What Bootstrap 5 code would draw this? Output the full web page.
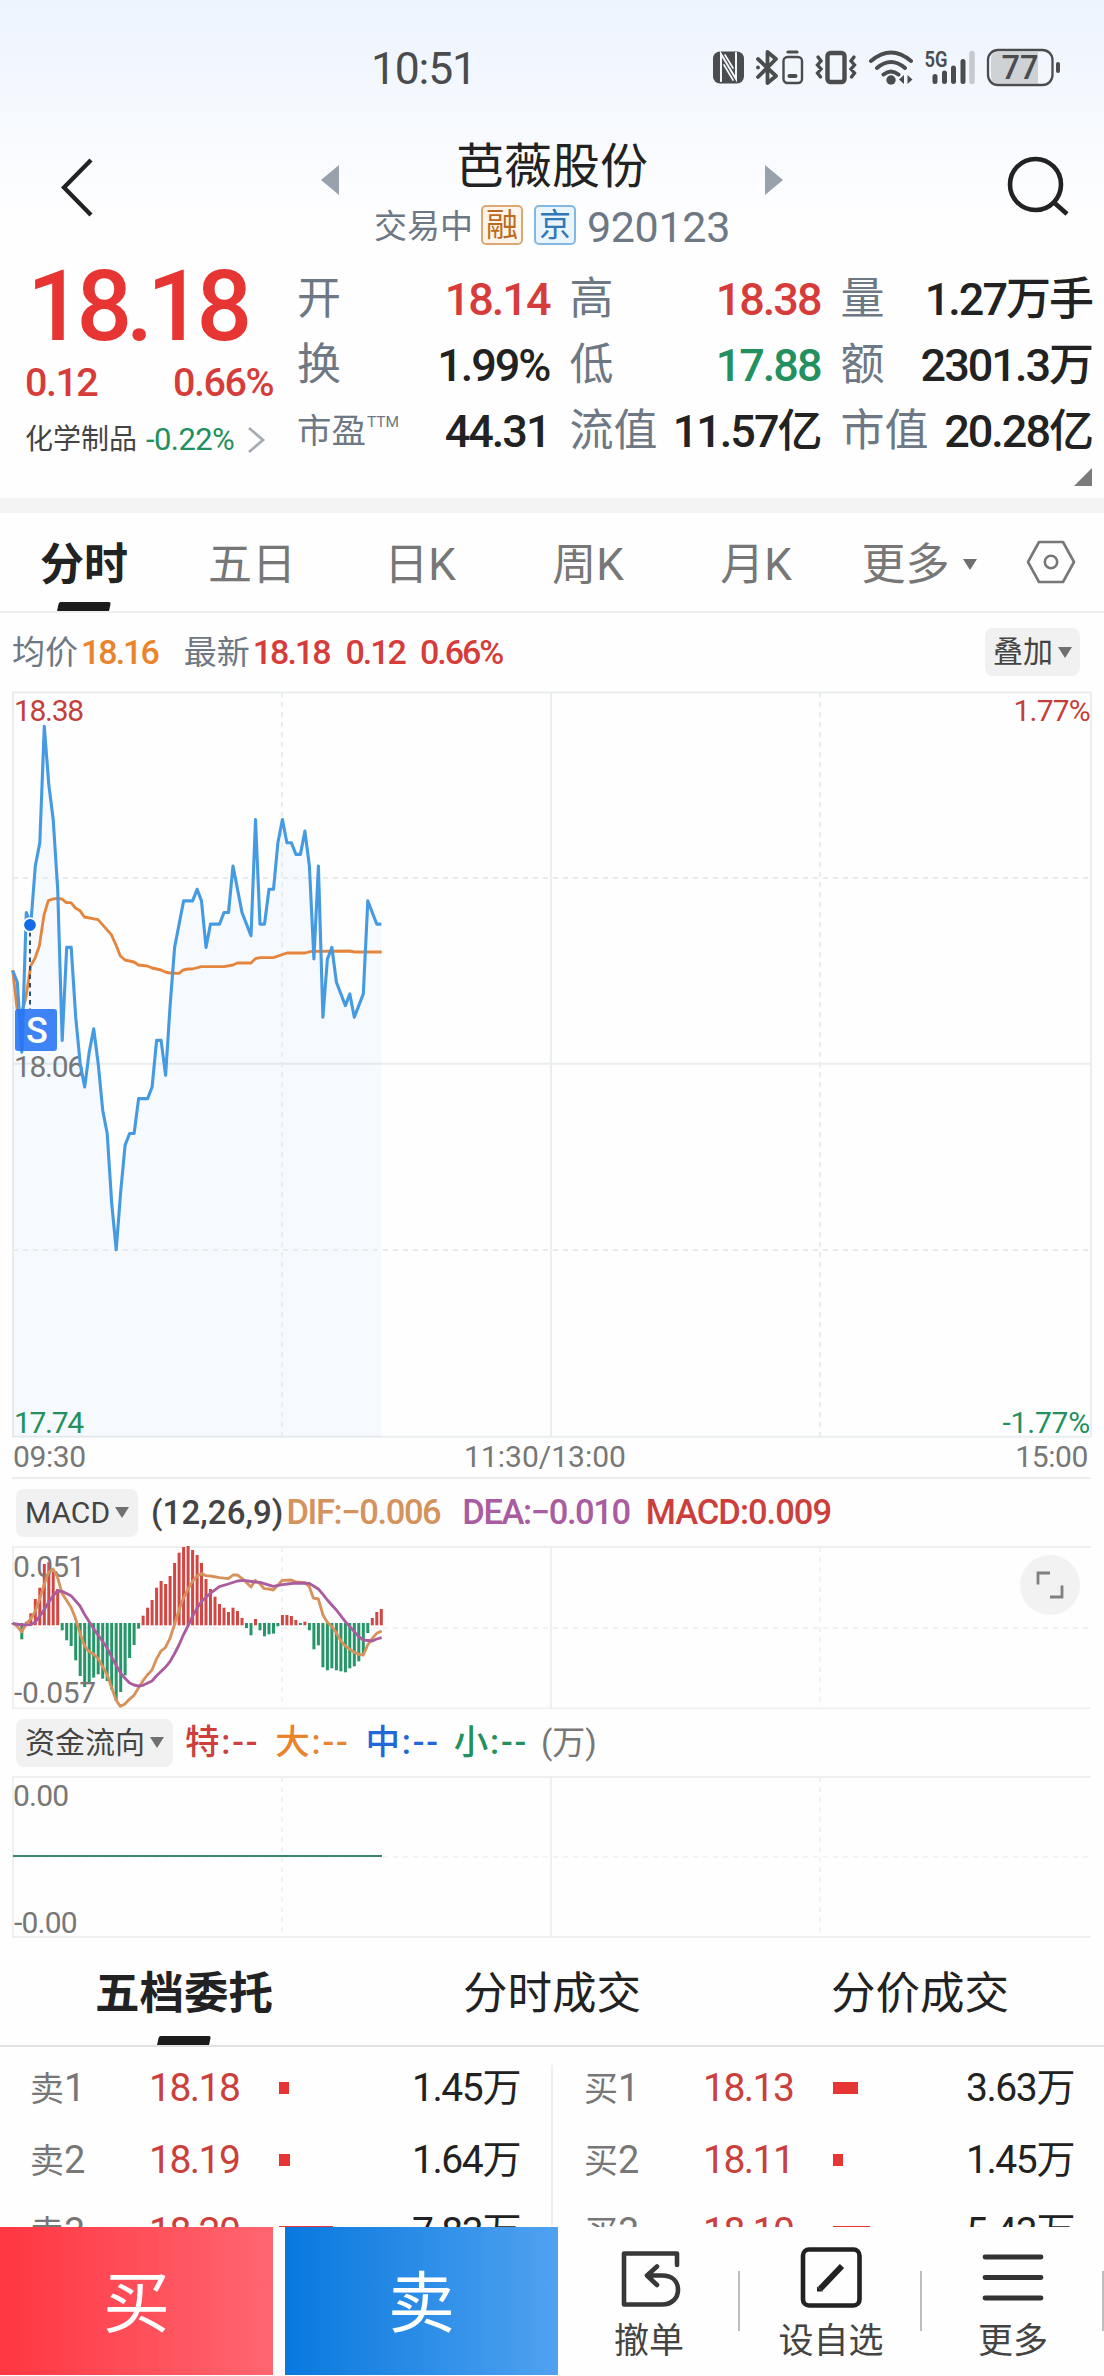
<!DOCTYPE html>
<html lang="zh-CN">
<head>
<meta charset="utf-8">
<meta name="viewport" content="width=device-width, initial-scale=1">
<title>芭薇股份 920123</title>
<link rel="stylesheet" href="https://cdn.jsdelivr.net/npm/bootstrap@5.3.0/dist/css/bootstrap.min.css">
<style>
  :root{--up:#d63c3a;--down:#22905f;--ink:#222;--slate:#6d7884;--soft:#777;--rule:#eceeef}
  body{font-family:Roboto,"Noto Sans CJK SC",sans-serif;color:var(--ink);background:#fefefe;width:1104px;height:2376px;overflow:hidden;line-height:1}
  .up{color:var(--up)} .down{color:var(--down)} .slate{color:var(--slate)} .soft{color:var(--soft)}
  svg{display:block;flex:none}
  svg text{font-family:Roboto,"Noto Sans CJK SC",sans-serif}
  .topzone{height:250px;background:linear-gradient(#edf4fe 0,#f6f9fe 45%,#fefefe 90%)}
  .statusbar{height:120px;padding:15px 44px 0 371px}
  .clock{font-size:44.5px;letter-spacing:-1.2px;color:#4a4b4d;padding-top:3px}
  .titlebar{height:130px;display:grid;grid-template-columns:321px 462px 321px}
  .stockname{font-size:48px;line-height:56px;margin-top:19px}
  .substate{font-size:33px;line-height:42px;margin-top:6px}
  .tagbox{width:42px;height:40px;border:2px solid;border-radius:5px;font-size:32px}
  .tag-rong{color:#bb6a20;border-color:#dca873;background:#fef5ea}
  .tag-jing{color:#3078b8;border-color:#84b8e4;background:#eaf5fe}
  .quote{height:248px;display:grid;grid-template-columns:297px 796px}
  .bigprice{font-size:98px;font-weight:500;letter-spacing:-6.2px;line-height:100px;color:#e63533;padding-left:27px;margin-top:7px}
  .change{font-size:39.5px;font-weight:500;letter-spacing:-1.5px;line-height:40px;padding:0 24px 0 25px;margin-top:6px}
  .sector{font-size:28px;line-height:34px;color:#444;padding-left:25px;margin-top:20px}
  .sector .pct{font-size:31px;letter-spacing:-.6px;margin-left:9px}
  .facts{display:grid;grid-template-columns:252.5px 251px 251.5px;column-gap:20px;grid-auto-rows:66px;margin-top:16px}
  .facts .lab{font-size:44px;color:var(--slate)}
  .facts .val{font-size:45px;font-weight:500;letter-spacing:-2px;white-space:nowrap}
  .band{height:15px;background:#f4f4f4}
  .periods{height:100px;display:grid;grid-template-columns:repeat(5,168px) 158px 1fr;border-bottom:2px solid var(--rule);font-size:44px;color:var(--soft)}
  .periods div,.depthtabs div{padding-top:5px}
  .picked{color:#222;font-weight:700;position:relative}
  .picked::after{content:"";position:absolute;bottom:0;left:50%;margin-left:-26px;width:52px;height:9px;background:#1c1c1c;transform:skewX(-12deg);border-radius:2px 2px 0 0}
  .dd::after{content:"";display:inline-block;border:7px solid transparent;border-top:11px solid #707070;border-bottom:0;margin-left:5px}
  .brief{height:78px;padding:0 24px 0 12px;font-size:33px}
  .brief b,.indic b{font-weight:500;font-size:34px;letter-spacing:-2px}
  .chip{background:#f1f1f1;border-radius:8px;height:48px;font-size:30px;color:#444;padding:0 9px}
  .brief .chip{padding:0 8px}
  .indic{height:67px;padding-left:16px;font-size:33px}
  .indic b{letter-spacing:-1.4px;font-size:34.5px}
  .indic .flow{letter-spacing:1.8px}
  .depthtabs{height:109px;display:grid;grid-template-columns:repeat(3,1fr);font-size:44.5px;border-bottom:2px solid #e2e2e2}
  .depth{height:180px;overflow:hidden;display:grid;grid-template-columns:552px 552px;padding-top:5px;position:relative}
  .depth::after{content:"";position:absolute;left:551px;top:18px;bottom:0;width:2px;background:#f0f0f0}
  .lvl{height:72px;display:grid;grid-template-columns:119px 130px 120px 121px;padding-left:30px;font-size:39px}
  .buys .lvl{padding-left:32px}
  .lvl .lab{font-size:34px;color:var(--soft)} .lvl .lab i{font-style:normal;font-size:38px}
  .lvl .px{color:#cb3f3d;letter-spacing:-1.5px}
  .lvl .qty{letter-spacing:-1.4px}
  .lvl .vol{height:12px;background:#e63533}
  .actions{height:148px;background:#fefefe;color:#444}
  .trade{height:148px;width:273px;color:#fff;font-size:67px;padding:7px 0 0;border:0}
  .buy{background:linear-gradient(90deg,#ff3742,#ff6671)}
  .sell{background:linear-gradient(90deg,#0878de,#50a2f0);margin-left:12px}
  .tool{font-size:35px;padding-top:15px;position:relative}
  .tool::after{content:"";position:absolute;right:0;top:44px;width:2.5px;height:60px;background:#bdbdbd}
  .tool span{line-height:40px;margin-top:10px}
</style>
</head>
<body>
<header class="topzone">
  <div class="statusbar d-flex align-items-center justify-content-between">
    <span class="clock">10:51</span>
    <svg width="350" height="42" viewBox="710 47 350 42" fill="none" stroke="#4b4c4e" stroke-width="2.6" stroke-linecap="round">
      <rect x="713" y="51.5" width="31" height="32" rx="7" fill="#4b4c4e" stroke="none"/>
      <path d="M721 81V54l15 25V53" stroke="#f3f7fe" stroke-width="2"/><path d="M724 65l9 15M725 55l8 13M721 54v27" stroke="#f3f7fe" stroke-width="1.7"/>
      <path d="M758 59l18 17-8.500 7V52l8.500 7-18 18" stroke-width="3.800" stroke-linejoin="round"/><circle cx="758" cy="67.500" r="1.900" fill="#4b4c4e" stroke="none"/>
      <rect x="783.500" y="57" width="18.500" height="26" rx="4" stroke-width="2.400"/><path d="M788 52h9" stroke-width="3.200"/><path d="M789.500 76h6" stroke-width="4"/>
      <rect x="827.500" y="53" width="17" height="29" rx="3" stroke-width="4.400"/>
      <path d="M818 57l3 4-3.500 4 3.500 4-3.500 4 3 4M854 57l-3 4 3.500 4-3.500 4 3.500 4-3 4" stroke-width="3.400"/>
      <path d="M871 61q20-17 40 0M877 68q14-12 28 0M883.500 74.500q7.500-6 15 0" stroke-width="4"/><circle cx="891" cy="80" r="4.700" fill="#4b4c4e" stroke="none"/>
      <path d="M904 75v9l-5-4.500zM907.500 75v9l5-4.500z" fill="#4b4c4e" stroke="none"/>
      <text x="924.500" y="67" font-size="22" font-weight="600" fill="#4b4c4e" stroke="none" textLength="23" lengthAdjust="spacingAndGlyphs">5G</text>
      <path d="M935 76.500v5M944.500 73v8.500M953.500 68v13.500M963 61.500v20" stroke-width="5"/><path d="M972 53.500v28" stroke="#c6c9ce" stroke-width="5.500"/>
      <path d="M998 52h40v31.500h-40q-7 0-7-7v-17.500q0-7 7-7z" fill="#cfd2d5" stroke="none"/>
      <rect x="988" y="50" width="64.500" height="35" rx="10" stroke-width="2.300"/><path d="M1058 64v7" stroke-width="4"/>
      <text x="1020" y="79" font-size="32.500" font-weight="500" text-anchor="middle" fill="#4b4c4e" stroke="none">77</text>
    </svg>
  </div>
  <div class="titlebar">
    <svg width="321" height="130" viewBox="0 120 321 130"><path d="M91 160L64 187.500 91 215" fill="none" stroke="#222" stroke-width="4.300"/></svg>
    <div class="d-flex justify-content-between">
      <svg width="18" height="130" viewBox="0 120 18 130"><path d="M0 180L18 165v30z" fill="#98a2ad"/></svg>
      <div class="text-center">
        <div class="stockname">芭薇股份</div>
        <div class="substate slate d-flex align-items-center justify-content-center">
          <span class="pt-1">交易中</span>
          <span class="tagbox tag-rong d-flex align-items-center justify-content-center ms-2">融</span>
          <span class="tagbox tag-jing d-flex align-items-center justify-content-center" style="margin-left:11px">京</span>
          <span style="font-size:43px;margin-left:11px;padding-top:5px;letter-spacing:-.3px">920123</span>
        </div>
      </div>
      <svg width="18" height="130" viewBox="0 120 18 130"><path d="M18 180L0 165v30z" fill="#98a2ad"/></svg>
    </div>
    <svg width="321" height="130" viewBox="783 120 321 130" fill="none" stroke="#222" stroke-width="4.600"><circle cx="1035.500" cy="184.500" r="25.500"/><path d="M1053.500 202l13.500 12"/></svg>
  </div>
</header>

<section class="quote">
  <div>
    <div class="bigprice">18.18</div>
    <div class="change up d-flex justify-content-between"><span>0.12</span><span>0.66%</span></div>
    <div class="sector d-flex align-items-center">
      <span>化学制品</span><span class="pct down">-0.22%</span>
      <svg class="ms-auto" width="20" height="28" viewBox="0 0 20 28" style="margin-right:30px"><path d="M2 2l14 12L2 26" fill="none" stroke="#a4abb3" stroke-width="2.800"/></svg>
    </div>
  </div>
  <div>
    <div class="facts">
      <div class="d-flex align-items-center justify-content-between"><span class="lab">开</span><span class="val up">18.14</span></div>
      <div class="d-flex align-items-center justify-content-between"><span class="lab">高</span><span class="val up">18.38</span></div>
      <div class="d-flex align-items-center justify-content-between"><span class="lab">量</span><span class="val">1.27万手</span></div>
      <div class="d-flex align-items-center justify-content-between"><span class="lab">换</span><span class="val">1.99%</span></div>
      <div class="d-flex align-items-center justify-content-between"><span class="lab">低</span><span class="val down">17.88</span></div>
      <div class="d-flex align-items-center justify-content-between"><span class="lab">额</span><span class="val">2301.3万</span></div>
      <div class="d-flex align-items-center justify-content-between"><span class="lab d-flex" style="font-size:34.500px">市盈<span style="font-size:15.500px;margin:1px 0 0 1px">TTM</span></span><span class="val">44.31</span></div>
      <div class="d-flex align-items-center justify-content-between"><span class="lab">流值</span><span class="val">11.57亿</span></div>
      <div class="d-flex align-items-center justify-content-between"><span class="lab">市值</span><span class="val">20.28亿</span></div>
    </div>
    <svg class="ms-auto" width="19" height="22" viewBox="0 2 19 22"><path d="M18 6v18H0z" fill="#7b7b7b"/></svg>
  </div>
</section>
<div class="band"></div>

<nav class="periods text-center">
  <div class="picked d-flex align-items-center justify-content-center">分时</div>
  <div class="d-flex align-items-center justify-content-center">五日</div>
  <div class="d-flex align-items-center justify-content-center">日K</div>
  <div class="d-flex align-items-center justify-content-center">周K</div>
  <div class="d-flex align-items-center justify-content-center">月K</div>
  <div class="d-flex align-items-center justify-content-center dd">更多<span class="ms-2"></span></div>
  <div class="d-flex align-items-center justify-content-center pt-0"><svg width="50" height="46" viewBox="0 0 50 46" fill="none" stroke="#777" stroke-width="2.600"><path d="M13 3h24l11 20-11 20H13L2 23z" stroke-linejoin="round"/><circle cx="25" cy="23" r="6.200"/></svg></div>
</nav>

<div class="brief d-flex align-items-center">
  <span class="slate">均价</span><b style="color:#e9842c;margin-left:3px">18.16</b>
  <span class="slate" style="margin-left:26px">最新</span><b class="up" style="margin-left:3px">18.18</b><b class="up" style="margin-left:16px">0.12</b><b class="up" style="margin-left:15px">0.66%</b>
  <span class="chip dd d-flex align-items-center ms-auto">叠加</span>
</div>

<svg width="1104" height="788" viewBox="0 691 1104 788" fill="none">
  <path d="M12 692.500H1091.500M12 1063.700H1091M12 1436.700H1091M13 692V1437M551 692V1437M1091 692V1437M12 1478H1091" stroke="#eaeeee" stroke-width="2"/>
  <path id="area" fill="#2f8be8" fill-opacity=".04"/>
  <path d="M13 878H1091M13 1250H1091M282 692V1437M820 692V1437" stroke="#e8ebec" stroke-width="1.800" stroke-dasharray="5 5"/>
  <g font-size="30" letter-spacing="-1.300">
    <text x="14" y="720.500" fill="#c43f3c">18.38</text>
    <text x="14" y="1077" fill="#777">18.06</text>
    <text x="14" y="1433" fill="#22905f">17.74</text>
    <g letter-spacing="-.8"><text x="1090" y="720.500" fill="#c43f3c" text-anchor="end">1.77%</text>
    <text x="1090" y="1433" fill="#22905f" text-anchor="end" letter-spacing="-.2">-1.77%</text></g>
    <g fill="#777" letter-spacing="-.4"><text x="13" y="1466.500">09:30</text><text x="545" y="1466.500" text-anchor="middle" letter-spacing="0">11:30/13:00</text><text x="1088" y="1466.500" text-anchor="end">15:00</text></g>
  </g>
  <polyline transform="translate(0 680) scale(.33333)" stroke="#e5853c" stroke-width="8.500" stroke-linejoin="round" points="38,870 51,985 60,1005 72,975 78,950 92,858 105,835 118,798 132,705 145,662 159,657 172,655 186,657 199,668 213,668 226,684 240,692 253,711 294,719 334,764 348,795 361,828 375,840 402,846 415,855 442,858 456,864 483,870 496,876 510,879 537,880 550,870 564,867 577,867 604,860 672,860 699,855 712,849 753,849 766,836 780,833 820,833 861,819 915,819 934,814 1049,813 1063,816 1145,816"/>
  <polyline id="price" stroke="#459ae2" stroke-width="3.100" stroke-linejoin="round"/>
  <path d="M30 932V1009" stroke="#2d4f73" stroke-width="2" stroke-dasharray="4.500 4"/>
  <circle cx="30" cy="925" r="6.800" fill="#146be8" stroke="#fff" stroke-width="1.800"/>
  <rect x="15" y="1009" width="42" height="42" rx="3" fill="#2673f5" fill-opacity=".88"/>
  <text x="37" y="1042.500" font-size="36" font-weight="500" fill="#fff" text-anchor="middle">S</text>
</svg>

<div class="indic d-flex align-items-center">
  <span class="chip dd d-flex align-items-center">MACD</span>
  <b style="margin-left:13px;color:#444;letter-spacing:.1px;font-size:33px">(12,26,9)</b>
  <b style="margin-left:3px;color:#d4925c">DIF:−0.006</b>
  <b style="margin-left:22px;color:#a95c9f">DEA:−0.010</b>
  <b style="margin-left:16px;color:#cc3f3c;letter-spacing:-1px">MACD:0.009</b>
</div>

<svg width="1104" height="163" viewBox="0 1546 1104 163" fill="none">
  <path d="M12 1547H1091M12 1708.300H1091M13 1547V1708M551 1547V1708" stroke="#eeefef" stroke-width="1.800"/>
  <path d="M13 1628H1091M282 1547V1708M820 1547V1708" stroke="#f0f1f1" stroke-width="1.800" stroke-dasharray="5 5"/>
  <g id="bars"></g>
  <g fill="#777" font-size="30" letter-spacing="-.8"><text x="13" y="1576.500">0.051</text><text x="14" y="1703" letter-spacing="-.3">-0.057</text></g>
  <g transform="translate(0 1470) scale(.33333)" stroke-width="8.500" stroke-linejoin="round">
    <polyline stroke="#d7925c" points="38,460 51,468 65,486 78,462 92,447 105,425 118,390 132,345 145,308 159,297 172,320 186,370 213,412 226,444 240,490 253,526 265,543 280,552 294,565 307,588 321,613 334,650 348,690 361,709 375,702 388,688 402,676 415,655 429,632 442,615 456,600 469,568 483,543 496,533 510,505 523,465 537,420 550,385 564,358 577,335 591,318 604,311 618,317 631,318 658,323 685,326 699,315 712,315 726,325 753,351 766,331 780,342 793,356 807,357 820,360 834,345 847,331 874,330 888,336 915,338 928,350 940,384 955,387 969,435 982,457 996,470 1009,488 1022,512 1036,528 1063,547 1078,553 1090,555 1103,525 1117,505 1130,490 1145,483"/>
    <polyline stroke="#aa5c9f" points="38,460 65,465 92,464 105,457 118,440 132,420 145,398 159,378 172,363 186,364 213,377 240,408 253,432 280,475 307,513 321,533 334,560 348,585 361,608 375,625 388,638 402,645 415,648 429,646 456,633 469,618 496,592 510,575 523,552 537,525 550,495 564,468 577,440 591,415 604,395 618,382 631,370 658,350 685,342 712,333 731,331 766,336 780,337 820,349 847,344 888,339 928,340 955,357 969,373 982,390 1009,420 1036,455 1063,485 1076,500 1090,510 1117,513 1130,507 1145,503"/>
  </g>
  <circle cx="1050" cy="1585" r="30" fill="#f2f2f2"/>
  <path d="M1038 1584.500V1573H1050M1050 1597H1062V1585.500" stroke="#808080" stroke-width="2.800"/>
</svg>

<div class="indic d-flex align-items-center">
  <span class="chip dd d-flex align-items-center">资金流向</span>
  <b class="flow" style="margin-left:12px;color:#cc3f3c">特:--</b>
  <b class="flow" style="margin-left:16px;color:#e9842c">大:--</b>
  <b class="flow" style="margin-left:16px;color:#2168d6">中:--</b>
  <b class="flow" style="margin-left:14px;color:#22905f">小:--</b>
  <span class="soft" style="margin-left:13px;font-size:33px">(万)</span>
</div>

<svg width="1104" height="162" viewBox="0 1776 1104 162" fill="none">
  <path d="M12 1777H1091M12 1937H1091M13 1777V1937M551 1777V1937" stroke="#eeefef" stroke-width="1.800"/>
  <path d="M13 1856.600H1091M282 1777V1937M820 1777V1937" stroke="#f0f1f1" stroke-width="1.800" stroke-dasharray="5 5"/>
  <path d="M13 1856H382" stroke="#3f8270" stroke-width="2.200"/>
  <g fill="#777" font-size="30" letter-spacing="-.8"><text x="13" y="1806">0.00</text><text x="14" y="1932.500">-0.00</text></g>
</svg>

<nav class="depthtabs">
  <div class="picked d-flex align-items-center justify-content-center">五档委托</div>
  <div class="d-flex align-items-center justify-content-center">分时成交</div>
  <div class="d-flex align-items-center justify-content-center">分价成交</div>
</nav>

<section class="depth">
  <div>
    <div class="lvl align-items-center"><span class="lab">卖<i>1</i></span><span class="px">18.18</span><span class="vol" style="width:10px"></span><span class="qty text-end">1.45万</span></div>
    <div class="lvl align-items-center"><span class="lab">卖<i>2</i></span><span class="px">18.19</span><span class="vol" style="width:11px"></span><span class="qty text-end">1.64万</span></div>
    <div class="lvl align-items-center"><span class="lab">卖<i>3</i></span><span class="px">18.20</span><span class="vol" style="width:54px"></span><span class="qty text-end">7.83万</span></div>
  </div>
  <div class="buys">
    <div class="lvl align-items-center"><span class="lab">买<i>1</i></span><span class="px">18.13</span><span class="vol" style="width:25px"></span><span class="qty text-end">3.63万</span></div>
    <div class="lvl align-items-center"><span class="lab">买<i>2</i></span><span class="px">18.11</span><span class="vol" style="width:10px"></span><span class="qty text-end">1.45万</span></div>
    <div class="lvl align-items-center"><span class="lab">买<i>3</i></span><span class="px">18.10</span><span class="vol" style="width:37px"></span><span class="qty text-end">5.43万</span></div>
  </div>
</section>

<footer class="actions d-flex">
  <button class="trade buy d-flex align-items-center justify-content-center">买</button>
  <button class="trade sell d-flex align-items-center justify-content-center">卖</button>
  <div class="tool d-flex flex-column align-items-center" style="width:182px">
    <svg width="66" height="70" viewBox="616 2242 66 70" fill="none" stroke="#383838" stroke-width="4.600" stroke-linecap="round" stroke-linejoin="round"><path d="M677 2265V2253.500H624V2304.500H662C672 2304.500 678 2298 678 2290C678 2281 672 2275.500 662 2275.500H648M657 2266.500L647 2275.500 657 2285"/></svg>
    <span>撤单</span>
  </div>
  <div class="tool d-flex flex-column align-items-center" style="width:182px">
    <svg width="66" height="70" viewBox="798 2242 66 70" fill="none" stroke="#222"><rect x="803" y="2249.500" width="56.500" height="56" rx="6" stroke-width="4.600"/><path d="M820 2289L842 2266" stroke-width="6"/><path d="M817 2291.500v-5l6 5z" fill="#222" stroke="none"/></svg>
    <span>设自选</span>
  </div>
  <div class="tool d-flex flex-column align-items-center" style="width:182px">
    <svg width="66" height="70" viewBox="980 2242 66 70" stroke="#333" stroke-width="4.800" stroke-linecap="round"><path d="M985 2257H1041M985 2277.500H1041M985 2298H1041"/></svg>
    <span>更多</span>
  </div>
</footer>

<script src="https://cdn.jsdelivr.net/npm/bootstrap@5.3.0/dist/js/bootstrap.bundle.min.js"></script>
<script>
  // One sample per minute; 240 trading minutes span the plot width.
  const x0 = 12.8, step = 4.494;
  // Ticks (0.01) above or below the previous close, 18.06.
  const ticks = [8,7,1,13,12,17,19,29,24,21,15,2,10,10,4,0,-2,1,3,0,-4,-6,-12,-16,-11,-7,-6,-6,-3,-3,-3,-2,2,2,-1,5,10,12,14,14,14,15,14,10,12,12,12,13,13,17,15,13,12,11,21,12,12,15,15,19,21,19,19,18,18,20,17,9,17,4,9,10,7,6,5,6,4,5,6,14,13,12,12];
  const pts = ticks.map((t, i) => (x0 + i * step).toFixed(1) + ',' + (1063.7 - t * 11.63).toFixed(1));
  document.getElementById('price').setAttribute('points', pts.join(' '));
  document.getElementById('area').setAttribute('d', 'M13 1437L' + pts.join(' ') + 'V1437Z');
  // MACD histogram, thirds of a pixel from the zero line; positive is up.
  const hist = [0,-8,-45,7,32,75,109,180,185,157,105,-18,-48,-65,-108,-155,-188,-178,-160,-150,-163,-170,-196,-228,-203,-153,-101,-62,-13,25,49,72,109,129,120,144,183,214,231,234,222,207,183,135,105,82,60,49,36,49,39,18,-11,-33,15,-18,-36,-30,-28,-6,27,27,24,12,-2,7,-18,-75,-63,-129,-138,-132,-138,-141,-144,-132,-126,-111,-87,-26,18,36,45];
  document.getElementById('bars').innerHTML = hist.map((h, i) => {
    const y = h > 0 ? 1624 - h / 3 : 1623, len = Math.abs(h) / 3 + 1.3;
    return `<rect x="${(x0 + i * step - 1.5).toFixed(1)}" y="${y.toFixed(1)}" width="3" height="${len.toFixed(1)}" fill="${h > 0 ? '#d24643' : '#259668'}"/>`;
  }).join('');
</script>
</body>
</html>
